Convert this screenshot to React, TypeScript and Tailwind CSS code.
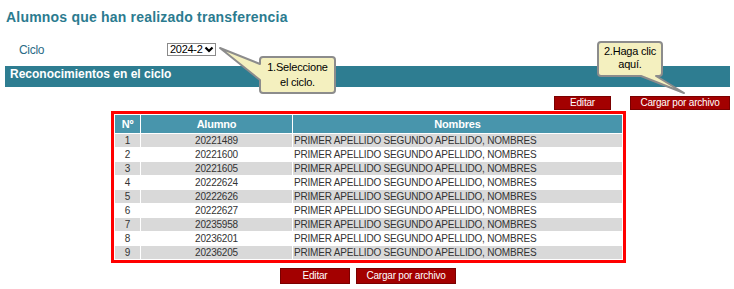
import React from "react"

const rows = [
	["1", "20221489"],
	["2", "20221600"],
	["3", "20221605"],
	["4", "20222624"],
	["5", "20222626"],
	["6", "20222627"],
	["7", "20235958"],
	["8", "20236201"],
	["9", "20236205"],
]

const NOMBRE = "PRIMER APELLIDO SEGUNDO APELLIDO, NOMBRES"

const RedButton = ({ label, size }: { label: string; size: string }) => (
	<button
		className={`${size} bg-[#a30000] border border-[#7a0000] text-white text-[10px] tracking-[-0.2px] leading-[12px] flex items-center justify-center`}>
		{label}
	</button>
)

const Callouts = () => (
	<svg
		className="absolute inset-0 pointer-events-none"
		width="734"
		height="289"
		viewBox="0 0 734 289">
		{/* callout 1 */}
		<path
			d="M263 57 H332 Q335 57 335 60 V90 Q335 93 332 93 H263 Q260 93 260 90 V80 L220 48 L260 64 V60 Q260 57 263 57 Z"
			fill="#f4f0bf"
			stroke="#8c8c8c"
			strokeWidth="2"
			strokeLinejoin="round"
		/>
		{/* callout 2 */}
		<path
			d="M601 42 H659 Q662 42 662 45 V73 Q662 76 659 76 H656 L684 93 L641 76 H601 Q598 76 598 73 V45 Q598 42 601 42 Z"
			fill="#f4f0bf"
			stroke="#8c8c8c"
			strokeWidth="2"
			strokeLinejoin="round"
		/>
	</svg>
)

export default function App() {
	return (
		<div className="relative w-[734px] h-[289px] bg-white overflow-hidden font-['Liberation_Sans',Arial,sans-serif] text-[#333]">
			<div className="pt-[8px] pl-[6px] text-[14px] leading-[18px] tracking-[0.2px] font-bold text-[#2b7b8f]">
				Alumnos que han realizado transferencia
			</div>

			<div className="mt-[17px] flex items-center h-[13px]">
				<div className="pl-[19px] w-[167px] text-[12px] tracking-[-0.3px] text-[#2a6b86]">Ciclo</div>
				<div className="w-[49px] h-[13px] border border-[#8a8a8a] flex items-center pl-[2px] text-[11px] leading-[11px] tracking-[-0.3px] text-black">
					2024-2
					<svg width="10" height="7" viewBox="0 0 10 7" className="ml-[2px]">
						<path d="M1.5 1.5 L5 5 L8.5 1.5" fill="none" stroke="black" strokeWidth="2.2" />
					</svg>
				</div>
			</div>

			<div className="mt-[10px] ml-[5px] w-[725px] h-[21px] bg-[#2e7d91] pl-[5px] pt-[1px] text-[12px] leading-[14px] font-bold text-white">
				Reconocimientos en el ciclo
			</div>

			<div className="mt-[9px] flex justify-end gap-[19px] pr-[4px]">
				<RedButton label="Editar" size="w-[57px] h-[14px]" />
				<RedButton label="Cargar por archivo" size="w-[100px] h-[14px]" />
			</div>

			<div className="mt-[1px] ml-[111px] w-[515px] border-[3px] border-[#ff0000]">
				<table className="w-[509px] border-separate border-spacing-[1px] text-[10px] tracking-[-0.2px]">
					<thead>
						<tr className="h-[18px] bg-[#4895ac] text-white text-[11px] font-bold">
							<th className="w-[25px]">Nº</th>
							<th className="w-[151px]">Alumno</th>
							<th>Nombres</th>
						</tr>
					</thead>
					<tbody>
						{rows.map(([n, code], i) => (
							<tr key={n} className={`h-[13px] leading-[13px] ${i % 2 === 0 ? "bg-[#d9d9d9]" : "bg-white"}`}>
								<td className="text-center">{n}</td>
								<td className="text-center">{code}</td>
								<td className="pl-[1px]">{NOMBRE}</td>
							</tr>
						))}
					</tbody>
				</table>
			</div>

			<div className="mt-[5px] flex justify-center gap-[6px] pl-[2px]">
				<RedButton label="Editar" size="w-[70px] h-[16px]" />
				<RedButton label="Cargar por archivo" size="w-[100px] h-[16px]" />
			</div>

			<Callouts />
			<div className="absolute left-[260px] top-[60px] w-[75px] text-center text-[11px] leading-[15px] tracking-[-0.2px] text-black">
				1.Seleccione
				<br />
				el ciclo.
			</div>
			<div className="absolute left-[598px] top-[45px] w-[64px] text-center text-[11px] leading-[13px] tracking-[-0.2px] text-black">
				2.Haga clic
				<br />
				aquí.
			</div>
		</div>
	)
}
